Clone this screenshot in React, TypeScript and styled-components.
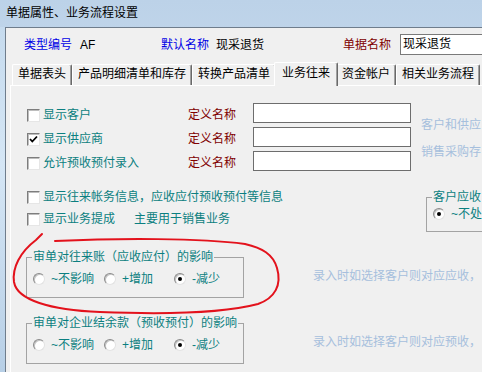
import React from "react";
import styled, { createGlobalStyle } from "styled-components";

const Global = createGlobalStyle`
  html, body { margin: 0; padding: 0; background: #f0f0f0; }
  body {
    font-family: "Liberation Sans", "Noto Sans CJK SC", sans-serif;
    font-size: 12px;
    -webkit-font-smoothing: antialiased;
  }
`;

const Window = styled.div`
  position: relative;
  width: 482px;
  height: 372px;
  overflow: hidden;
  display: flex;
  flex-direction: column;
  background: linear-gradient(180deg, #bcd2e8 0%, #c9dcef 40%, #d8e9f7 100%);
`;

const TitleBar = styled.div`
  flex-shrink: 0;
  height: 27px;
  box-sizing: border-box;
  padding: 0 0 2px 6px;
  display: flex;
  align-items: center;
  font-size: 12px;
  line-height: 14px;
  color: #000;
  white-space: nowrap;
`;

const Body = styled.div`
  flex: 1;
  display: flex;
  min-height: 0;
`;

const FrameEdge = styled.div`
  width: 5px;
  flex-shrink: 0;
  background: linear-gradient(180deg, #c6dbee 0%, #d5e6f5 40%, #b7cfe6 100%);
`;

const Client = styled.div`
  flex: 1;
  min-width: 0;
  display: flex;
  flex-direction: column;
  background: #f0f0f0;
  border-top: 1px solid #6f7d8c;
  border-left: 1px solid #6f7d8c;
`;

const TopRow = styled.div`
  flex-shrink: 0;
  margin-top: 6px;
  height: 21px;
  padding-left: 18px;
  display: flex;
  align-items: center;
  white-space: nowrap;
`;

const Cap = styled.span<{ $w: number; $c?: string }>`
  flex-shrink: 0;
  width: ${(p) => p.$w}px;
  color: ${(p) => p.$c || "#000"};
  line-height: 14px;
`;

const NameBox = styled.div`
  flex-shrink: 0;
  width: 82px;
  height: 21px;
  box-sizing: border-box;
  border: 1px solid #7a7a7a;
  border-right: none;
  background: #fff;
  padding-left: 2px;
  line-height: 19px;
  white-space: nowrap;
`;

const TabStrip = styled.div`
  flex-shrink: 0;
  position: relative;
  z-index: 1;
  margin-top: 7px;
  height: 23px;
  padding-left: 6px;
  display: flex;
  align-items: flex-end;
`;

const Tab = styled.div<{ $active?: boolean }>`
  position: relative;
  flex-shrink: 0;
  box-sizing: border-box;
  height: ${(p) => (p.$active ? 24 : 21)}px;
  margin: ${(p) => (p.$active ? "0 -2px -1px" : "0")};
  padding: 0 ${(p) => (p.$active ? 7 : 5)}px;
  z-index: ${(p) => (p.$active ? 2 : 1)};
  line-height: ${(p) => (p.$active ? 20 : 19)}px;
  background: #f0f0f0;
  border-top: 1px solid #fff;
  border-left: 1px solid #fff;
  border-right: 1px solid #696969;
  border-radius: 2px 2px 0 0;
  box-shadow: inset -1px 0 0 #a0a0a0;
  color: #000;
  white-space: nowrap;
`;

const Panel = styled.div`
  flex: 1;
  margin-left: 4px;
  padding-left: 15px;
  border-top: 1px solid #fff;
  border-left: 1px solid #fff;
  display: flex;
  flex-direction: column;
`;

const NameSection = styled.div`
  display: flex;
  padding-top: 17px;
`;

const NameGrid = styled.div`
  flex-shrink: 0;
  display: grid;
  grid-template-columns: 162px 65px 158px;
  grid-auto-rows: 20px;
  row-gap: 4px;
  align-items: center;
`;

const HintCol = styled.div`
  margin-left: 10px;
  padding-top: 15px;
  display: flex;
  flex-direction: column;
  gap: 13px;
`;

const Hint = styled.div`
  color: #a6bfdd;
  line-height: 14px;
  white-space: nowrap;
`;

const CheckRow = styled.label<{ $low?: boolean }>`
  display: flex;
  align-items: center;
  height: 20px;
  box-sizing: border-box;
  padding-left: 1px;
  padding-top: ${(p) => (p.$low ? 4 : 0)}px;
  white-space: nowrap;
`;

const Box = styled.span`
  flex-shrink: 0;
  width: 13px;
  height: 13px;
  box-sizing: border-box;
  margin-right: 3px;
  background: #fff;
  border: 1px solid;
  border-color: #7d7d7d #e6e6e6 #e6e6e6 #7d7d7d;
  box-shadow: inset 1px 1px 0 #bdbdbd;
  display: flex;
  align-items: center;
  justify-content: center;
`;

const Teal = styled.span<{ $ml?: number }>`
  color: #0b7f80;
  line-height: 14px;
  margin-left: ${(p) => p.$ml || 0}px;
`;

const Maroon = styled.span`
  color: #800000;
  line-height: 14px;
  padding-top: 4px;
`;

const Field = styled.div`
  width: 158px;
  height: 20px;
  box-sizing: border-box;
  border: 1px solid #6d6d6d;
  background: #fff;
`;

const InfoSection = styled.div`
  display: flex;
  margin-top: 16px;
`;

const InfoCol = styled.div`
  flex-shrink: 0;
  width: 400px;
  display: flex;
  flex-direction: column;
  gap: 2px;
`;

const Group = styled.fieldset<{ $w: number; $pt: number; $pb: number }>`
  flex-shrink: 0;
  margin: 0;
  min-width: 0;
  width: ${(p) => p.$w}px;
  box-sizing: border-box;
  padding: ${(p) => p.$pt}px 0 ${(p) => p.$pb}px 6px;
  border: 1px solid #a3a3a3;
  white-space: nowrap;
`;

const Legend = styled.legend`
  padding: 0 1px;
  margin-left: -1px;
  color: #0b7f80;
  line-height: 14px;
  font-size: 12px;
`;

const SideGroup = styled.div`
  flex-shrink: 0;
  margin-top: 3px;
`;

const EffectSection = styled.div`
  display: flex;
  flex-direction: column;
  gap: 18px;
  margin-top: 18px;
`;

const EffectRow = styled.div`
  display: flex;
  align-items: center;
`;

const EffectHint = styled(Hint)`
  margin-left: 69px;
  padding-top: 4px;
`;

const RadioRow = styled.div`
  display: flex;
  align-items: center;
  height: 14px;
`;

const RadioItem = styled.label<{ $w?: number }>`
  flex-shrink: 0;
  display: flex;
  align-items: center;
  gap: 6px;
  width: ${(p) => (p.$w ? `${p.$w}px` : "auto")};
  white-space: nowrap;
`;

const Dot = styled.span<{ $on?: boolean }>`
  flex-shrink: 0;
  position: relative;
  width: 12px;
  height: 12px;
  box-sizing: border-box;
  border-radius: 50%;
  background: #fff;
  border: 1px solid;
  border-color: #8a8a8a #e2e2e2 #e2e2e2 #8a8a8a;
  box-shadow: inset 1px 1px 0 #c4c4c4;
  &::after {
    content: "";
    display: ${(p) => (p.$on ? "block" : "none")};
    position: absolute;
    left: 3px;
    top: 3px;
    width: 4px;
    height: 4px;
    border-radius: 50%;
    background: #000;
  }
`;

const Annotation = styled.svg`
  position: absolute;
  left: 0;
  top: 0;
  width: 482px;
  height: 372px;
  pointer-events: none;
  z-index: 5;
`;

const Check = ({ on }: { on?: boolean }) => (
  <Box>
    {on && (
      <svg width="9" height="9" viewBox="0 0 9 9">
        <path d="M1 4 L3.3 6.5 L8 1.5" fill="none" stroke="#000" strokeWidth="1.8" />
      </svg>
    )}
  </Box>
);

const Radio = ({ on, label, w }: { on?: boolean; label: string; w?: number }) => (
  <RadioItem $w={w}>
    <Dot $on={on} />
    <Teal>{label}</Teal>
  </RadioItem>
);

const tabs = ["单据表头", "产品明细清单和库存", "转换产品清单", "业务往来", "资金帐户", "相关业务流程"];

const nameRows = [
  { label: "显示客户", on: false },
  { label: "显示供应商", on: true },
  { label: "允许预收预付录入", on: false },
];

const effects = [
  { title: "审单对往来账（应收应付）的影响", hint: "录入时如选择客户则对应应收，" },
  { title: "审单对企业结余款（预收预付）的影响", hint: "录入时如选择客户则对应预收，" },
];

export default function App() {
  return (
    <>
      <Global />
      <Window>
        <TitleBar>单据属性、业务流程设置</TitleBar>
        <Body>
          <FrameEdge />
          <Client>
            <TopRow>
              <Cap $w={56} $c="#0000e6">类型编号</Cap>
              <Cap $w={81}>AF</Cap>
              <Cap $w={55} $c="#0000e6">默认名称</Cap>
              <Cap $w={127}>现采退货</Cap>
              <Cap $w={57} $c="#800000">单据名称</Cap>
              <NameBox>现采退货</NameBox>
            </TopRow>
            <TabStrip>
              {tabs.map((t, i) => (
                <Tab key={t} $active={i === 3}>
                  {t}
                </Tab>
              ))}
            </TabStrip>
            <Panel>
              <NameSection>
                <NameGrid>
                  {nameRows.map((r) => (
                    <React.Fragment key={r.label}>
                      <CheckRow $low>
                        <Check on={r.on} />
                        <Teal>{r.label}</Teal>
                      </CheckRow>
                      <Maroon>定义名称</Maroon>
                      <Field />
                    </React.Fragment>
                  ))}
                </NameGrid>
                <HintCol>
                  <Hint>客户和供应</Hint>
                  <Hint>销售采购存</Hint>
                </HintCol>
              </NameSection>
              <InfoSection>
                <InfoCol>
                  <CheckRow>
                    <Check />
                    <Teal>显示往来帐务信息，应收应付预收预付等信息</Teal>
                  </CheckRow>
                  <CheckRow>
                    <Check />
                    <Teal>显示业务提成</Teal>
                    <Teal $ml={19}>主要用于销售业务</Teal>
                  </CheckRow>
                </InfoCol>
                <SideGroup>
                  <Group $w={62} $pt={3} $pb={10}>
                    <Legend>客户应收</Legend>
                    <RadioRow>
                      <Radio on label="~不处" />
                    </RadioRow>
                  </Group>
                </SideGroup>
              </InfoSection>
              <EffectSection>
                {effects.map((e) => (
                  <EffectRow key={e.title}>
                    <Group $w={218} $pt={8} $pb={11}>
                      <Legend>{e.title}</Legend>
                      <RadioRow>
                        <Radio w={71} label="~不影响" />
                        <Radio w={70} label="+增加" />
                        <Radio on label="-减少" />
                      </RadioRow>
                    </Group>
                    <EffectHint>{e.hint}</EffectHint>
                  </EffectRow>
                ))}
              </EffectSection>
            </Panel>
          </Client>
        </Body>
        <Annotation viewBox="0 0 482 372">
          <path
            d="M42 234 C40 236 38 238 36 240 C20 252 12 268 14 282 C17 300 50 310 100 312 C150 314 220 314 258 304 C275 298 282 285 277 268 C273 254 262 248 245 244 C200 238 120 238 55 241"
            fill="none"
            stroke="#e3121c"
            strokeWidth="2"
            strokeLinecap="round"
          />
        </Annotation>
      </Window>
    </>
  );
}
